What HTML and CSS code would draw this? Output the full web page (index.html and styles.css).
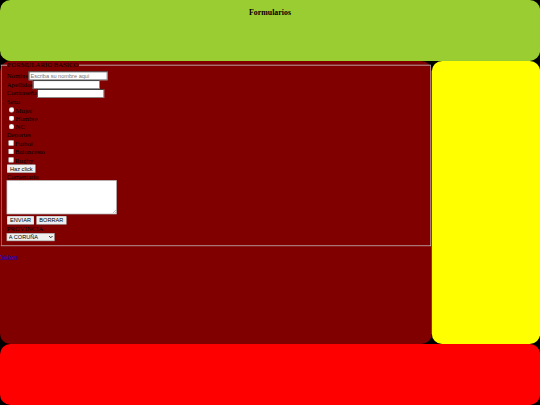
FILE: index.html
```html
<!DOCTYPE html>
<html lang="es">
<head>
    <meta charset="UTF-8">
    <title>Formularios</title>
    <link rel="stylesheet" href="styles.css">
</head>
<body>
    <div class="marco">
        <div class="page">
            <header class="cabecera">
                <h3>Formularios</h3>
            </header>
            <main class="contenido">
                <form>
                    <fieldset>
                        <legend>FORMULARIO BASICO</legend>
                        <label for="nombre">Nombre</label><input type="text" id="nombre" class="campo-nombre" placeholder="Escriba su nombre aqui"><br>
                        <label for="apellidos">Apellidos</label><input type="text" id="apellidos"><br>
                        <label for="clave">Contraseña</label><input type="password" id="clave"><br>
                        Sexo<br>
                        <input type="radio" name="sexo">Mujer<br>
                        <input type="radio" name="sexo">Hombre<br>
                        <input type="radio" name="sexo">NC<br>
                        Deportes<br>
                        <input type="checkbox">Futbol<br>
                        <input type="checkbox">Baloncesto<br>
                        <input type="checkbox">Rugby<br>
                        <button type="button">Haz click</button><br>
                        Comentario<br>
                        <textarea class="comentario"></textarea><br>
                        <button type="submit">ENVIAR</button>
                        <button type="reset">BORRAR</button><br>
                        PROVINCIA<br>
                        <select class="provincia">
                            <option>A CORUÑA</option>
                            <option>LUGO</option>
                            <option>OURENSE</option>
                            <option>PONTEVEDRA</option>
                        </select>
                    </fieldset>
                </form>
                <p class="volver"><a href="#">Volver</a></p>
            </main>
            <aside class="lateral"></aside>
            <footer class="pie"></footer>
        </div>
    </div>
</body>
</html>
```

FILE: styles.css
```css
body {
    margin: 0;
    background-color: #000000;
    font-family: "Liberation Serif", "Times New Roman", serif;
    color: #000000;
}
.marco {
    width: 540px;
    height: 405px;
    overflow: hidden;
}
/* the reference is a desktop page photographed at 42% */
.page {
    display: grid;
    grid-template-columns: 1028px 257.7px;
    grid-template-rows: 145px 674px 145.2px;
    width: 1285.7px;
    transform: scale(0.42);
    transform-origin: 0 0;
}
.cabecera {
    grid-column: 1 / 3;
    background-color: #9acd32;
    border-radius: 25px;
    text-align: center;
}
.contenido {
    background-color: #800000;
    border-radius: 25px;
}
.lateral {
    background-color: #ffff00;
    border-radius: 25px;
}
.pie {
    grid-column: 1 / 3;
    background-color: #ff0000;
    border-radius: 25px;
}
fieldset {
    line-height: 19px;
}
input, button, select {
    font-family: "Liberation Sans", Arial, sans-serif;
}
input[type="text"], input[type="password"] {
    box-sizing: border-box;
    width: 160px;
    border-radius: 0;
}
input.campo-nombre {
    width: 188px;
}
.comentario {
    width: 256px;
    height: 75px;
    margin: -2px 0 4px;
    border-radius: 0;
    vertical-align: top;
}
.provincia {
    width: 114px;
    margin-top: -2px;
    border-radius: 0;
}
```
